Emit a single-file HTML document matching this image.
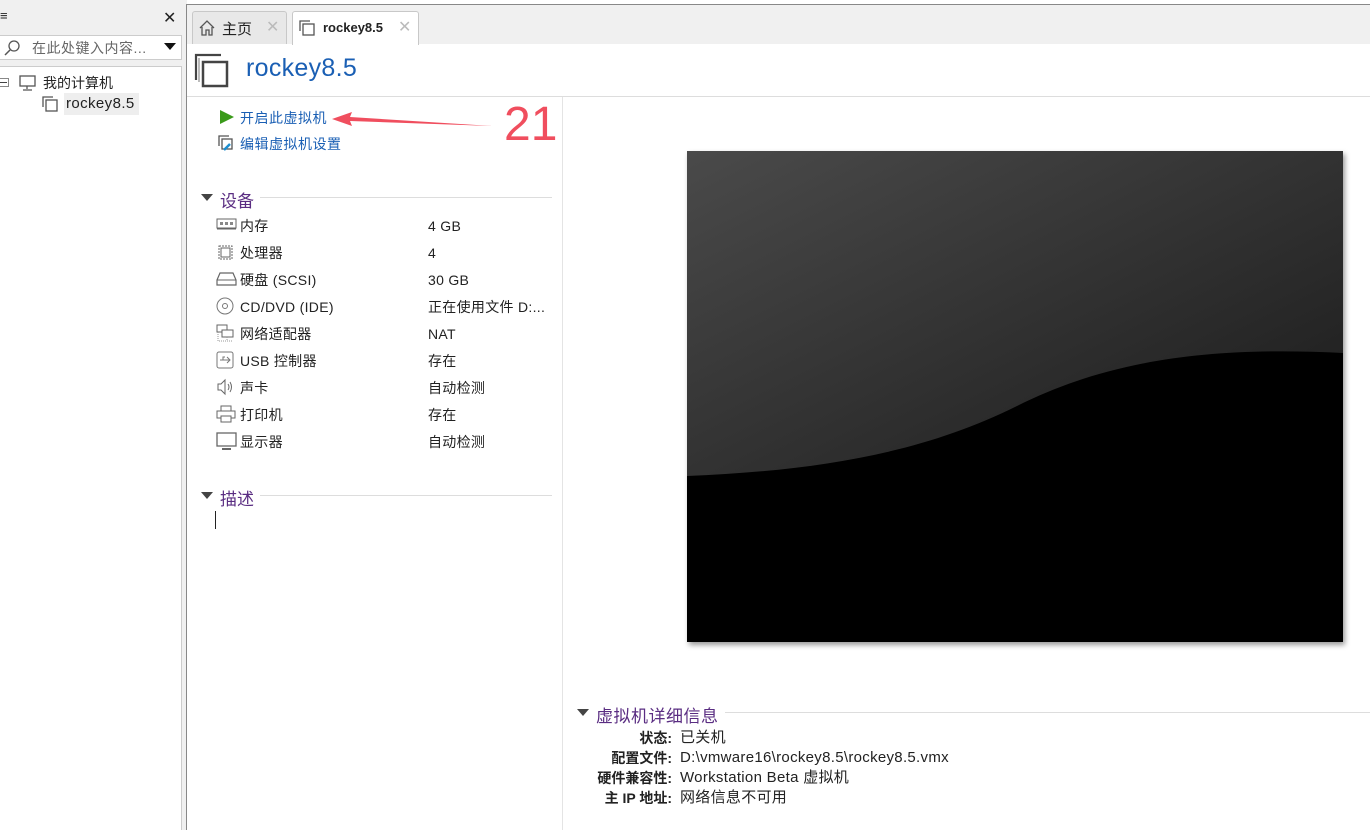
<!DOCTYPE html>
<html><head><meta charset="utf-8"><style>
*{margin:0;padding:0;box-sizing:border-box}
body{width:1370px;height:830px;background:#fff;font-family:"Liberation Sans","Noto Sans CJK SC",sans-serif;font-size:14px;color:#222;position:relative;overflow:hidden}
.a{position:absolute}
.t{white-space:nowrap}
.ic{position:absolute;left:216px}
</style></head><body>
<!-- left panel -->
<div class="a" style="left:0;top:0;width:187px;height:830px;background:#f0f0f0"></div>
<div class="a t" style="left:0;top:8px;font-size:13px">≡</div>
<div class="a t" style="left:163px;top:8px;font-size:16px">✕</div>
<div class="a" style="left:0;top:35px;width:182px;height:25px;background:#fff;border:1px solid #ccc;border-left:none"></div>
<svg class="a" style="left:2px;top:39px" width="20" height="18"><circle cx="12" cy="7" r="5" fill="none" stroke="#555" stroke-width="1.3"/><path d="M8 11 L3 16" stroke="#555" stroke-width="1.5"/></svg>
<div class="a t" style="left:32px;top:38px;font-size:14px;color:#666;letter-spacing:0.5px">在此处键入内容...</div>
<svg class="a" style="left:164px;top:43px" width="12" height="8"><path d="M0 0H12L6 7Z" fill="#111"/></svg>
<div class="a" style="left:0;top:66px;width:182px;height:764px;background:#fff;border-top:1px solid #ccc;border-right:1px solid #ccc"></div>
<div class="a" style="left:0;top:78px;width:9px;height:9px;border:1px solid #888;border-left:none"></div>
<div class="a" style="left:0;top:82px;width:7px;height:1px;background:#444"></div>
<svg class="a" style="left:18px;top:74px" width="20" height="18"><rect x="2" y="2" width="15" height="10" fill="none" stroke="#555" stroke-width="1.3"/><path d="M9 12V15M5 16H14" stroke="#555" stroke-width="1.3"/></svg>
<div class="a t" style="left:43px;top:73px;font-size:14px">我的计算机</div>
<svg class="a" style="left:41px;top:95px" width="20" height="18"><path d="M2 12V2H12" fill="none" stroke="#555" stroke-width="1.3"/><rect x="5" y="5" width="11" height="11" fill="none" stroke="#555" stroke-width="1.3"/></svg>
<div class="a" style="left:64px;top:93px;width:75px;height:22px;background:#eee"></div>
<div class="a t" style="left:66px;top:95px;font-size:15px;letter-spacing:0.4px">rockey8.5</div>
<!-- separator -->
<div class="a" style="left:182px;top:0;width:5px;height:830px;background:#f0f0f0"></div>
<div class="a" style="left:186px;top:4px;width:1px;height:826px;background:#888"></div>
<!-- tab bar -->
<div class="a" style="left:187px;top:4px;width:1183px;height:40px;background:#f0f0f0;border-top:1px solid #888"></div>
<div class="a" style="left:192px;top:11px;width:95px;height:33px;background:#e8e8e8;border:1px solid #c8c8c8;border-bottom:none;border-radius:3px 3px 0 0"></div>
<svg class="a" style="left:198px;top:19px" width="18" height="18"><path d="M2 9L9 2L16 9M4 8V16H8V11H11V16H14V8" fill="none" stroke="#555" stroke-width="1.3"/></svg>
<div class="a t" style="left:222px;top:18px;font-size:15px">主页</div>
<div class="a t" style="left:266px;top:17px;font-size:16px;color:#bbb">✕</div>
<div class="a" style="left:292px;top:11px;width:127px;height:34px;background:#fff;border:1px solid #c8c8c8;border-bottom:none;border-radius:3px 3px 0 0"></div>
<svg class="a" style="left:298px;top:19px" width="20" height="18"><path d="M2 12V2H12" fill="none" stroke="#555" stroke-width="1.3"/><rect x="5" y="5" width="11" height="11" fill="none" stroke="#555" stroke-width="1.3"/></svg>
<div class="a t" style="left:323px;top:20px;font-size:13px;font-weight:bold">rockey8.5</div>
<div class="a t" style="left:398px;top:17px;font-size:16px;color:#bbb">✕</div>
<!-- header -->
<svg class="a" style="left:193px;top:52px" width="40" height="38"><path d="M3 28V3H28" fill="none" stroke="#444" stroke-width="2.2"/><path d="M6 30V6" stroke="#777" stroke-width="1"/><rect x="10" y="10" width="24" height="24" fill="none" stroke="#444" stroke-width="2.5"/></svg>
<div class="a t" style="left:246px;top:54px;font-size:25px;color:#1a5fb4;letter-spacing:0.3px">rockey8.5</div>
<div class="a" style="left:187px;top:96px;width:1183px;height:1px;background:#ddd"></div>
<div class="a" style="left:562px;top:97px;width:1px;height:733px;background:#e4e4e4"></div>
<!-- actions -->
<svg class="a" style="left:219px;top:109px" width="16" height="16"><path d="M1 1L15 8L1 15Z" fill="#3a9a1a"/></svg>
<div class="a t" style="left:240px;top:108px;font-size:14px;color:#1a5fb4;letter-spacing:0.5px">开启此虚拟机</div>
<svg class="a" style="left:217px;top:134px" width="20" height="18"><path d="M2 12V2H12" fill="none" stroke="#555" stroke-width="1.3"/><rect x="5" y="5" width="10" height="10" fill="none" stroke="#555" stroke-width="1.3"/><path d="M7 16L13 10" stroke="#1d8fd0" stroke-width="2.5"/></svg>
<div class="a t" style="left:240px;top:134px;font-size:14px;color:#1a5fb4;letter-spacing:0.5px">编辑虚拟机设置</div>
<svg class="a" style="left:330px;top:110px" width="165" height="20"><path d="M2 9L22 2L20 7L162 16L20 11L22 16Z" fill="#f04e5e"/></svg>
<div class="a t" style="left:504px;top:97px;font-size:48px;color:#f04e5e">21</div>
<!-- devices -->
<svg class="a" style="left:201px;top:194px" width="12" height="8"><path d="M0 0H12L6 7Z" fill="#444"/></svg>
<div class="a t" style="left:220px;top:187px;font-size:17px;color:#5a2d82">设备</div>
<div class="a" style="left:260px;top:197px;width:292px;height:1px;background:#ddd"></div>
<svg class="ic" style="top:217px" width="22" height="14"><rect x="1" y="2" width="19" height="9" fill="none" stroke="#666"/><path d="M4 5h3v3H4zM9 5h3v3H9zM14 5h3v3h-3z" fill="#888"/><path d="M1 12H20" stroke="#666"/></svg>
<svg class="ic" style="top:243px" width="20" height="18"><rect x="3" y="3" width="13" height="13" fill="none" stroke="#666" stroke-dasharray="2 1"/><rect x="5" y="5" width="9" height="9" fill="none" stroke="#666"/></svg>
<svg class="ic" style="top:270px" width="22" height="18"><path d="M4 3H17L20 10V15H1V10Z" fill="none" stroke="#666" stroke-width="1.2"/><path d="M1 10H20" stroke="#666"/></svg>
<svg class="ic" style="top:297px" width="20" height="18"><circle cx="9" cy="9" r="8" fill="none" stroke="#777"/><circle cx="9" cy="9" r="2.5" fill="none" stroke="#777"/></svg>
<svg class="ic" style="top:324px" width="20" height="18"><rect x="1" y="1" width="10" height="7" fill="none" stroke="#666"/><rect x="6" y="6" width="11" height="7" fill="#fff" stroke="#666"/><path d="M11 13V17M2 8V17H17" fill="none" stroke="#999" stroke-dasharray="1 1"/></svg>
<svg class="ic" style="top:351px" width="20" height="18"><rect x="1" y="1" width="16" height="16" rx="2" fill="none" stroke="#777"/><path d="M4 9H14M11 6L14 9L11 12M7 9V6H9" fill="none" stroke="#777"/></svg>
<svg class="ic" style="top:378px" width="20" height="18"><path d="M2 6H5L9 2V16L5 12H2Z" fill="none" stroke="#666"/><path d="M12 6Q14 9 12 12M14 4Q17 9 14 14" fill="none" stroke="#666"/></svg>
<svg class="ic" style="top:405px" width="20" height="18"><rect x="5" y="1" width="10" height="5" fill="none" stroke="#666"/><rect x="1" y="6" width="18" height="7" fill="none" stroke="#666"/><rect x="5" y="11" width="10" height="6" fill="#fff" stroke="#666"/></svg>
<svg class="ic" style="top:432px" width="22" height="18"><rect x="1" y="1" width="19" height="13" fill="none" stroke="#666" stroke-width="1.3"/><path d="M6 17H15" stroke="#666" stroke-width="2"/></svg>
<div class="a" style="left:240px;top:213px;font-size:14px;line-height:27px;letter-spacing:0.3px">
<div>内存</div><div>处理器</div><div>硬盘 (SCSI)</div><div>CD/DVD (IDE)</div><div>网络适配器</div><div>USB 控制器</div><div>声卡</div><div>打印机</div><div>显示器</div>
</div>
<div class="a t" style="left:428px;top:213px;font-size:14px;line-height:27px;letter-spacing:0.3px">
<div>4 GB</div><div>4</div><div>30 GB</div><div>正在使用文件 D:...</div><div>NAT</div><div>存在</div><div>自动检测</div><div>存在</div><div>自动检测</div>
</div>
<!-- desc -->
<svg class="a" style="left:201px;top:492px" width="12" height="8"><path d="M0 0H12L6 7Z" fill="#444"/></svg>
<div class="a t" style="left:220px;top:485px;font-size:17px;color:#5a2d82">描述</div>
<div class="a" style="left:260px;top:495px;width:292px;height:1px;background:#ddd"></div>
<div class="a" style="left:215px;top:511px;width:1px;height:18px;background:#222"></div>
<!-- screen -->
<svg class="a" style="left:687px;top:151px;box-shadow:2px 3px 5px rgba(0,0,0,.4)" width="656" height="491">
<defs><linearGradient id="g" x1="0" y1="0" x2="1" y2="1"><stop offset="0" stop-color="#4a4a4a"/><stop offset="1" stop-color="#1a1a1a"/></linearGradient></defs>
<rect width="656" height="491" fill="#000"/>
<path d="M0 0H656V202C520 195 420 210 330 255C230 305 120 320 0 325Z" fill="url(#g)"/>
</svg>
<!-- details -->
<svg class="a" style="left:577px;top:709px" width="12" height="8"><path d="M0 0H12L6 7Z" fill="#444"/></svg>
<div class="a t" style="left:596px;top:702px;font-size:17px;color:#5a2d82;letter-spacing:0.5px">虚拟机详细信息</div>
<div class="a" style="left:725px;top:712px;width:645px;height:1px;background:#ddd"></div>
<div class="a t" style="left:560px;top:728px;width:112px;text-align:right;font-size:14px;font-weight:bold;line-height:20px">状态:<br>配置文件:<br>硬件兼容性:<br>主 IP 地址:</div>
<div class="a t" style="left:680px;top:728px;font-size:15px;line-height:20px;letter-spacing:0.3px">已关机<br>D:\vmware16\rockey8.5\rockey8.5.vmx<br>Workstation Beta 虚拟机<br>网络信息不可用</div>
</body></html>
